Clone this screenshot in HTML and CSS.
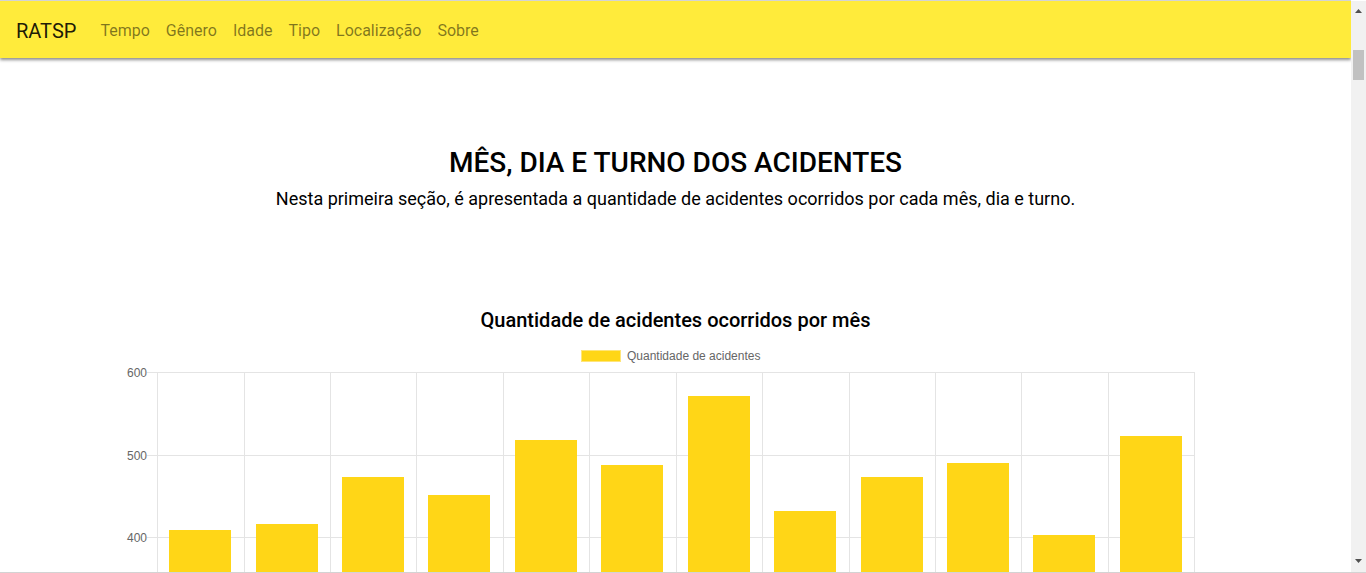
FILE: index.html
```html
<!DOCTYPE html>
<html lang="pt-BR">
<head>
<meta charset="utf-8">
<title>RATSP</title>
<link rel="stylesheet" href="styles.css">
</head>
<body>
<nav class="navbar">
  <a class="brand" href="#">RATSP</a>
  <ul class="nav-links">
    <li><a href="#">Tempo</a></li>
    <li><a href="#">Gênero</a></li>
    <li><a href="#">Idade</a></li>
    <li><a href="#">Tipo</a></li>
    <li><a href="#">Localização</a></li>
    <li><a href="#">Sobre</a></li>
  </ul>
</nav>
<main>
  <section class="intro">
    <h2 class="section-title">MÊS, DIA E TURNO DOS ACIDENTES</h2>
    <p class="section-lead">Nesta primeira seção, é apresentada a quantidade de acidentes ocorridos por cada mês, dia e turno.</p>
  </section>
  <section class="chart-block">
    <h3 class="chart-title">Quantidade de acidentes ocorridos por mês</h3>
    <svg class="chart" width="1351" height="520" viewBox="0 0 1351 520">
      <g class="legend">
        <rect x="581.5" y="10.5" width="39" height="11" fill="#FFD617" stroke="#FFE57A"/>
        <text x="627" y="20" class="legend-text">Quantidade de acidentes</text>
      </g>
      <g class="grid" stroke="#e4e4e4" stroke-width="1">
        <line x1="147" y1="32.5" x2="1194" y2="32.5"/>
        <line x1="147" y1="115.5" x2="1194" y2="115.5"/>
        <line x1="147" y1="197.5" x2="1194" y2="197.5"/>
        <line x1="147" y1="280.5" x2="1194" y2="280.5"/>
        <line x1="147" y1="362.5" x2="1194" y2="362.5"/>
        <line x1="147" y1="445.5" x2="1194" y2="445.5"/>
        <line x1="157.5" y1="32" x2="157.5" y2="460"/>
        <line x1="244.5" y1="32" x2="244.5" y2="460"/>
        <line x1="330.5" y1="32" x2="330.5" y2="460"/>
        <line x1="416.5" y1="32" x2="416.5" y2="460"/>
        <line x1="503.5" y1="32" x2="503.5" y2="460"/>
        <line x1="589.5" y1="32" x2="589.5" y2="460"/>
        <line x1="676.5" y1="32" x2="676.5" y2="460"/>
        <line x1="762.5" y1="32" x2="762.5" y2="460"/>
        <line x1="849.5" y1="32" x2="849.5" y2="460"/>
        <line x1="935.5" y1="32" x2="935.5" y2="460"/>
        <line x1="1021.5" y1="32" x2="1021.5" y2="460"/>
        <line x1="1108.5" y1="32" x2="1108.5" y2="460"/>
        <line x1="1194.5" y1="32" x2="1194.5" y2="460"/>
      </g>
      <g class="ylabels">
        <text x="147" y="36.5">600</text>
        <text x="147" y="119.5">500</text>
        <text x="147" y="201.5">400</text>
        <text x="147" y="284.5">300</text>
        <text x="147" y="366.5">200</text>
        <text x="147" y="449.5">100</text>
      </g>
      <g class="bars" fill="#FFD617">
        <rect x="169" y="190" width="62" height="270"/>
        <rect x="256" y="184" width="62" height="276"/>
        <rect x="342" y="137" width="62" height="323"/>
        <rect x="428" y="155" width="62" height="305"/>
        <rect x="515" y="100" width="62" height="360"/>
        <rect x="601" y="125" width="62" height="335"/>
        <rect x="688" y="56" width="62" height="404"/>
        <rect x="774" y="171" width="62" height="289"/>
        <rect x="861" y="137" width="62" height="323"/>
        <rect x="947" y="123" width="62" height="337"/>
        <rect x="1033" y="195" width="62" height="265"/>
        <rect x="1120" y="96" width="62" height="364"/>
      </g>
    </svg>
  </section>
  <div class="spacer"></div>
</main>
<div class="scrollbar" aria-hidden="true">
  <svg class="sb-arrow" width="15" height="17" viewBox="0 0 15 17"><path d="M4 12 L7.5 8 L11 12 Z" fill="#505050"/></svg>
  <div class="sb-track"><div class="sb-thumb"></div></div>
  <svg class="sb-arrow" width="15" height="17" viewBox="0 0 15 17"><path d="M4 4 L7.5 8 L11 4 Z" fill="#505050"/></svg>
</div>
<div class="frame-bottom"></div>
</body>
</html>
```
FILE: styles.css
```css
html, body {
  margin: 0;
  padding: 0;
}
body {
  margin-right: 15px;
  font-family: Roboto, "Liberation Sans", sans-serif;
  color: #212529;
  background: #fff;
  border-top: 1px solid #d3d3d3;
}
.navbar {
  display: flex;
  align-items: center;
  box-sizing: border-box;
  height: 57px;
  padding: 2px 16px 0;
  background: #FFEB3B;
  box-shadow: 0 2px 3px rgba(0, 0, 0, 0.45);
  position: relative;
  z-index: 2;
}
.brand {
  font-size: 20px;
  color: rgba(0, 0, 0, 0.9);
  text-decoration: none;
  margin-right: 16px;
}
.nav-links {
  display: flex;
  list-style: none;
  margin: 0;
  padding: 0;
}
.nav-links a {
  display: block;
  padding: 8px;
  font-size: 16px;
  color: rgba(0, 0, 0, 0.5);
  text-decoration: none;
}
main {
  display: flex;
  flex-direction: column;
}
.intro {
  text-align: center;
  padding-top: 88px;
}
.section-title {
  margin: 0;
  font-size: 28px;
  font-weight: 500;
  line-height: 34px;
  color: #000;
}
.section-lead {
  margin: 7px 0 0;
  font-size: 18px;
  line-height: 24px;
  color: #000;
}
.chart-block {
  padding-top: 97px;
  display: flex;
  flex-direction: column;
  align-items: flex-start;
}
.chart-title {
  align-self: stretch;
  text-align: center;
  margin: 0;
  font-size: 20px;
  font-weight: 500;
  line-height: 24px;
  color: #000;
}
.chart {
  display: block;
  margin-top: 8px;
  font-family: "Liberation Sans", Arial, sans-serif;
}
.legend-text {
  font-size: 12px;
  fill: #666;
}
.ylabels text {
  font-size: 12px;
  fill: #666;
  text-anchor: end;
}
.spacer {
  height: 2400px;
}
.scrollbar {
  position: fixed;
  top: 1px;
  right: 0;
  bottom: 1px;
  width: 15px;
  background: #f1f1f1;
  display: flex;
  flex-direction: column;
  z-index: 5;
}
.sb-arrow {
  display: block;
  flex: none;
}
.sb-track {
  flex: 1;
  padding: 32px 2px 0;
}
.sb-thumb {
  height: 30px;
  background: #c1c1c1;
}
.frame-bottom {
  position: fixed;
  left: 0;
  right: 0;
  bottom: 0;
  height: 1px;
  background: #d3d3d3;
  z-index: 6;
}
```
